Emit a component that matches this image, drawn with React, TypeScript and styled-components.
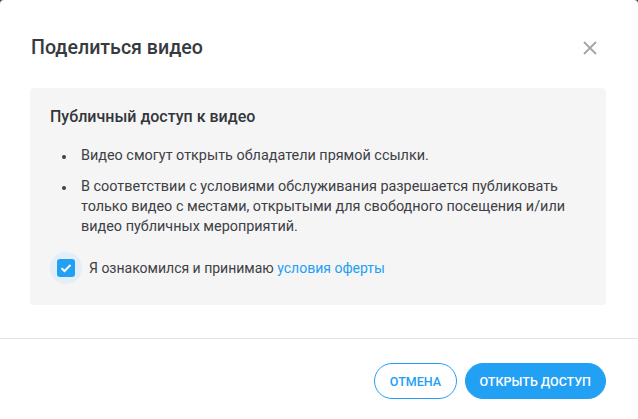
import styled, { createGlobalStyle } from 'styled-components';

const Global = createGlobalStyle`
  html, body {
    margin: 0;
    padding: 0;
    background: #4a4d52;
    font-family: Roboto, "Noto Sans", sans-serif;
  }
`;

const BLUE = '#22a0f4';

const App = () => {
  return (
    <>
      <Global />
      <S.Dialog>
        <S.Header>
          <h2>Поделиться видео</h2>
          <S.Close aria-label="close">
            <svg width="14" height="14" viewBox="0 0 14 14">
              <path d="M1 1L13 13M13 1L1 13" stroke="#a1a5ab" strokeWidth="1.8" />
            </svg>
          </S.Close>
        </S.Header>

        <S.Body>
          <S.Panel>
            <h3>Публичный доступ к видео</h3>
            <ul>
              <li>Видео смогут открыть обладатели прямой ссылки.</li>
              <li>
                В соответствии с условиями обслуживания разрешается публиковать
                только видео с местами, открытыми для свободного посещения и/или
                видео публичных мероприятий.
              </li>
            </ul>
            <S.Agree>
              <S.Check>
                <span>
                  <svg width="12" height="10" viewBox="0 0 12 10">
                    <path d="M1.5 5.2L4.5 8L10.5 2" stroke="#fff" strokeWidth="2" fill="none" />
                  </svg>
                </span>
              </S.Check>
              <p>
                Я ознакомился и принимаю <a href="#">условия оферты</a>
              </p>
            </S.Agree>
          </S.Panel>
        </S.Body>

        <S.Footer>
          <S.Button $variant="outline">Отмена</S.Button>
          <S.Button $variant="fill">Открыть доступ</S.Button>
        </S.Footer>
      </S.Dialog>
    </>
  );
};

export default App;

const S = {
  Dialog: styled.div`
    width: 638px;
    height: 419px;
    background: #fff;
    border-radius: 4px 4px 0 0;
    display: flex;
    flex-direction: column;
    box-sizing: border-box;
  `,

  Header: styled.div`
    display: flex;
    align-items: flex-start;
    justify-content: space-between;
    padding: 34px 30px 0 31px;
    height: 88px;
    box-sizing: border-box;

    h2 {
      margin: 0;
      font-size: 19.6px;
      font-weight: 500;
      line-height: 28px;
      color: #373a3f;
    }
  `,

  Close: styled.button`
    border: none;
    background: none;
    padding: 0;
    margin-top: 7px;
    margin-right: 11px;
    width: 14px;
    height: 14px;
    display: flex;
    cursor: pointer;
  `,

  Body: styled.div`
    padding: 0 32px 0 30px;
  `,

  Panel: styled.div`
    background: #f5f5f5;
    border-radius: 4px;
    padding: 18px 20px 0;
    height: 217px;
    box-sizing: border-box;
    color: #3d4045;

    h3 {
      margin: 0;
      font-size: 16px;
      font-weight: 500;
      line-height: 22px;
      color: #33363b;
    }

    ul {
      margin: 18px 0 0;
      padding: 0 0 0 31px;
      list-style: none;
      font-size: 14.4px;
      line-height: 20px;
    }

    li {
      position: relative;
      margin-bottom: 11px;
    }

    li::before {
      content: '';
      position: absolute;
      left: -19px;
      top: 9px;
      width: 4px;
      height: 4px;
      border-radius: 50%;
      background: #3d4045;
    }
  `,

  Agree: styled.div`
    display: flex;
    align-items: center;
    gap: 7px;
    margin-top: 15px;

    p {
      margin: 0;
      font-size: 14px;
      color: #3d4045;
    }

    a {
      color: ${BLUE};
      text-decoration: none;
    }
  `,

  Check: styled.div`
    width: 32px;
    height: 32px;
    border-radius: 50%;
    background: #e3eef8;
    display: flex;
    align-items: center;
    justify-content: center;

    span {
      width: 18px;
      height: 18px;
      border-radius: 3px;
      background: ${BLUE};
      display: flex;
      align-items: center;
      justify-content: center;
    }
  `,

  Footer: styled.div`
    margin-top: 33px;
    border-top: 1px solid #e3e3e3;
    display: flex;
    justify-content: flex-end;
    gap: 8px;
    padding: 24px 32px 0 0;
  `,

  Button: styled.button<{ $variant: 'outline' | 'fill' }>`
    height: 36px;
    border-radius: 18px;
    padding: 0 ${({ $variant }) => ($variant === 'fill' ? '14px' : '14.5px')};
    font-family: Roboto, sans-serif;
    font-size: 12.5px;
    font-weight: 500;
    text-transform: uppercase;
    cursor: pointer;
    box-sizing: border-box;
    border: 1px solid ${BLUE};
    background: ${({ $variant }) => ($variant === 'fill' ? BLUE : '#fff')};
    color: ${({ $variant }) => ($variant === 'fill' ? '#fff' : BLUE)};
  `,
};
